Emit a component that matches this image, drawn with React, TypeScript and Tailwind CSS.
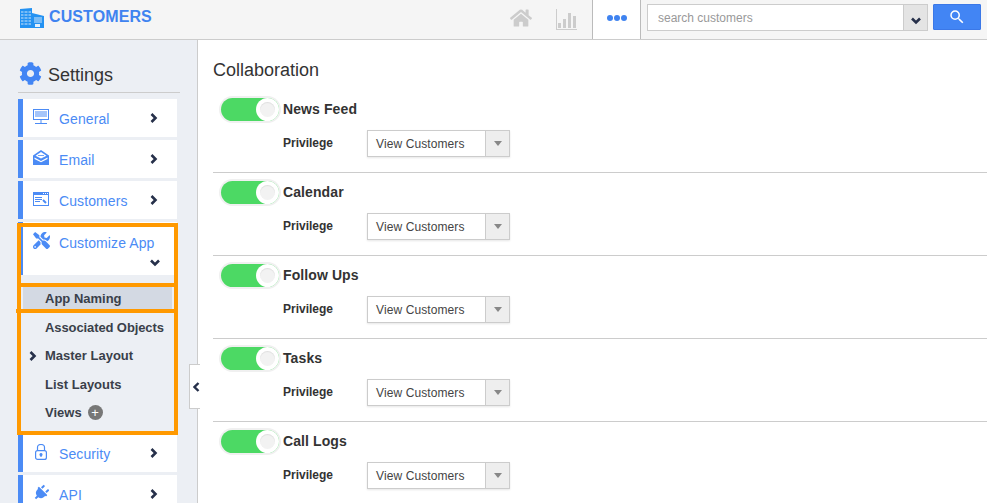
import { ReactNode } from 'react';
import { FaCog, FaHome, FaPlug, FaTools } from 'react-icons/fa';
import { MdSearch } from 'react-icons/md';

const FONT = "font-['Liberation_Sans',Arial,sans-serif]";

function BuildingIcon() {
  return (
    <svg width="24" height="20" viewBox="0 0 24 20" fill="#2492f2">
      <path d="M0 1 L12 0 V20 H0 Z" />
      <path d="M12 5 L24 8 V20 H12 Z" />
      <g stroke="#cfe6fb" strokeWidth="1">
        <path d="M1 4H11M1 7H11M1 10H11M1 13H11M1 16H11" />
        <path d="M14 10H22M14 12H22M14 14H22" />
      </g>
      <path d="M4 2V18M8 2V18" stroke="#2492f2" strokeWidth="1" />
      <rect x="15" y="16" width="5" height="3" fill="#e4f1fd" />
    </svg>
  );
}

function ChartIcon() {
  return (
    <svg width="21" height="21" viewBox="0 0 21 21" fill="#ccc">
      <path d="M0 0H1V20H21V21H0Z" />
      <rect x="2" y="14" width="3" height="5" />
      <rect x="7" y="10" width="3" height="9" />
      <rect x="12" y="4" width="3" height="15" />
      <rect x="17" y="7" width="3" height="12" />
    </svg>
  );
}

function MonitorIcon() {
  return (
    <svg width="16" height="15" viewBox="0 0 16 15" fill="none" stroke="#4b8bf5">
      <rect x="0.5" y="0.5" width="15" height="10" />
      <path d="M2 3H14M2 5H14M2 7H14M8 11V14M2 14.5H14" />
    </svg>
  );
}

function MailIcon() {
  return (
    <svg width="16" height="15" viewBox="0 0 16 15" fill="#4b8bf5">
      <path d="M8 0 L16 5.5 V15 H0 V5.5 Z" />
      <path d="M8 2 L13.5 5.8 L8 8.6 L2.5 5.8 Z" fill="#ffffff" />
      <path d="M5 5H11V5.8H5Z" />
      <path d="M1.5 7.5 L8 11 L14.5 7.5 V9 L8 12.2 L1.5 9 Z" fill="#ffffff" />
    </svg>
  );
}

function WindowIcon() {
  return (
    <svg width="16" height="14" viewBox="0 0 16 14" fill="none" stroke="#4b8bf5">
      <rect x="0.5" y="0.5" width="15" height="13" />
      <rect x="0" y="0" width="16" height="3" fill="#4b8bf5" stroke="none" />
      <path d="M10 1.5H11M12 1.5H13M14 1.5H15" stroke="#ffffff" />
      <path d="M2 5.5H9M2 7.5H9M2 9.5H7" />
      <path d="M10 8L13 11" strokeWidth="2" />
    </svg>
  );
}

function LockIcon() {
  return (
    <svg width="12" height="16" viewBox="0 0 12 16" fill="none" stroke="#4b8bf5" strokeWidth="1.2">
      <rect x="0.6" y="6.6" width="10.8" height="8.8" rx="2" />
      <path d="M2.5 6.5V3.5A3.5 3 0 0 1 9.5 3.5V6.5" />
      <circle cx="6" cy="10.5" r="1" fill="#4b8bf5" />
      <path d="M6 11V13" />
    </svg>
  );
}

function ChevronRight() {
  return (
    <svg width="8" height="10" viewBox="0 0 8 10" fill="none" stroke="#26304a" strokeWidth="2.6">
      <path d="M1.5 1L5.5 5L1.5 9" />
    </svg>
  );
}

function ChevronDown() {
  return (
    <svg width="10" height="8" viewBox="0 0 10 8" fill="none" stroke="#26304a" strokeWidth="2.6">
      <path d="M1 1.5L5 5.5L9 1.5" />
    </svg>
  );
}

function MenuCard({ icon, label }: { icon: ReactNode; label: string }) {
  return (
    <div className="flex h-[38px] shrink-0 items-center border-l-[5px] border-[#4b8bf5] bg-white">
      <span className="flex w-[36px] justify-center pr-[1px] pb-[3px]">{icon}</span>
      <span className="w-[91px] pt-[2px] text-[14px] tracking-[0.1px] text-[#4b8bf5]">{label}</span>
      <ChevronRight />
    </div>
  );
}

function SubItem({ label, active, tight }: { label: string; active?: boolean; tight?: boolean }) {
  return (
    <div className={`relative flex h-[28.4px] items-center pl-[27px] text-[13px] font-bold text-[#3a3f4a] ${active ? 'pt-0' : 'pt-[2px]'} ${tight ? 'tracking-[-0.1px]' : ''}`}>
      {active && <span className="absolute left-[11px] flex"><ChevronRight /></span>}
      {label}
    </div>
  );
}

function FeatureRow({ title, last }: { title: string; last?: boolean }) {
  return (
    <div className={`mb-[6px] h-[77px] shrink-0 pl-[8px] ${last ? '' : 'border-b border-[#cccccc]'}`}>
      <div className="flex h-[26px] items-center">
        <div className="flex h-[23px] w-[58px] items-center justify-end rounded-full bg-[#4cd964] shadow-[0_0_0_2px_#f0f0f0]">
          <div className="flex h-[23px] w-[23px] items-center justify-center rounded-full bg-white">
            <div className="h-[15px] w-[15px] rounded-full bg-[#f2f2f2] shadow-[inset_0_1px_1px_rgba(0,0,0,0.08)]" />
          </div>
        </div>
        <span className="ml-[4px] text-[14px] font-bold tracking-[0.1px] text-[#333333]">{title}</span>
      </div>
      <div className="mt-[8px] flex items-center pl-[62px]">
        <span className="w-[84px] pb-[2px] text-[12px] font-bold text-[#333333]">Privilege</span>
        <div className="flex h-[27px] w-[143px] items-center border border-[#cccccc] bg-white shadow-[0_1px_2px_rgba(0,0,0,0.1)]">
          <span className="flex-1 pl-[8px] text-[12px] tracking-[0.1px] text-[#444444]">View Customers</span>
          <span className="flex h-full w-[24px] items-center justify-center border-l border-[#cccccc] bg-[#eeeeee]">
            <span className="h-0 w-0 border-x-[4px] border-t-[5px] border-x-transparent border-t-[#888888]" />
          </span>
        </div>
      </div>
    </div>
  );
}

export default function App() {
  const features = ['News Feed', 'Calendar', 'Follow Ups', 'Tasks', 'Call Logs'];

  return (
    <div className={`${FONT} flex h-[503px] w-[987px] flex-col overflow-hidden bg-white`}>
      {/* Top bar */}
      <header className="flex h-[40px] shrink-0 items-start border-b border-[#cccccc] bg-[#f5f5f5]">
        <div className="mt-[8px] ml-[20px] flex items-start gap-[5px]">
          <BuildingIcon />
          <span className="text-[16px] leading-[18px] font-bold tracking-[0.1px] text-[#3f83f0]">CUSTOMERS</span>
        </div>
        <div className="ml-auto flex h-full items-start">
          <FaHome className="mt-[7px] text-[22px] text-[#cccccc]" />
          <span className="mt-[9px] ml-[24px]"><ChartIcon /></span>
          <div className="ml-[15px] flex h-full w-[49px] items-center justify-center gap-[1px] border-x border-[#bbbbbb] bg-white pb-[3px]">
            <span className="h-[6px] w-[6px] rounded-full bg-[#3f83f0]" />
            <span className="h-[6px] w-[6px] rounded-full bg-[#3f83f0]" />
            <span className="h-[6px] w-[6px] rounded-full bg-[#3f83f0]" />
          </div>
          <div className="mt-[4px] ml-[6px] flex h-[27px] w-[281px] border border-[#cccccc] bg-white">
            <span className="flex-1 self-center pl-[10px] text-[12px] text-[#999999]">search customers</span>
            <span className="flex w-[24px] items-center justify-center border-l border-[#cccccc] bg-[#e4e4e4] pt-[7px]">
              <ChevronDown />
            </span>
          </div>
          <div className="mt-[4px] mr-[6px] ml-[5px] flex h-[26px] w-[48px] items-center justify-center rounded-[1px] border border-[#3b78e7] bg-[#4285f4]">
            <MdSearch className="text-[18px] text-white" />
          </div>
        </div>
      </header>

      <div className="flex min-h-0 flex-1">
        {/* Sidebar */}
        <aside className="relative w-[198px] shrink-0 border-r border-[#cccccc] bg-[#eceff4] pl-[18px]">
          <div className="mt-[22px] flex h-[31px] w-[162px] items-start gap-[6px] border-b border-[#cccccc] pl-[1px]">
            <FaCog className="text-[23px] text-[#4285f4]" />
            <span className="text-[18px] text-[#333333]">Settings</span>
          </div>
          <div className="mt-[6px] flex w-[159px] flex-col gap-[3px]">
            <MenuCard icon={<MonitorIcon />} label="General" />
            <MenuCard icon={<MailIcon />} label="Email" />
            <MenuCard icon={<WindowIcon />} label="Customers" />
            <div className="flex h-[53px] shrink-0 items-start border-l-[5px] border-[#4b8bf5] bg-white pt-[10px]">
              <FaTools className="ml-[10px] text-[17px] text-[#4b8bf5]" />
              <div className="mt-px ml-[9px] text-[14px] tracking-[0.1px] text-[#4b8bf5]">
                Customize App
                <span className="mt-[5px] ml-[91px] flex"><ChevronDown /></span>
              </div>
            </div>
            <div className="flex flex-col">
              <div className="mx-[5px] mt-[9px] flex h-[22px] items-center bg-[#d3d9e3] pt-[2px] pl-[22px] text-[13px] font-bold text-[#3a3f4a]">App Naming</div>
              <div className="h-[4px]" />
              <SubItem label="Associated Objects" tight />
              <SubItem label="Master Layout" active />
              <SubItem label="List Layouts" />
              <div className="flex h-[28px] items-center gap-[6px] pl-[27px] text-[13px] font-bold text-[#3a3f4a]">
                <span className="pt-[2px]">Views</span>
                <span className="flex h-[15px] w-[15px] items-center justify-center rounded-full bg-[#777777] text-[13px] leading-none font-normal text-white">+</span>
              </div>
              <div className="h-[5px]" />
            </div>
            <MenuCard icon={<LockIcon />} label="Security" />
            <MenuCard icon={<FaPlug className="rotate-45 text-[16px] text-[#4b8bf5]" />} label="API" />
          </div>

          {/* Orange annotation boxes */}
          <div className="absolute top-[183px] left-[17px] h-[64px] w-[161px] border-[4px] border-[#ff9900]" />
          <div className="absolute top-[243px] left-[17px] h-[30px] w-[161px] border-[4px] border-[#ff9900]" />
          <div className="absolute top-[269px] left-[17px] h-[126px] w-[161px] border-[4px] border-[#ff9900]" />
          <div className="absolute top-[269px] left-[16px] h-[4px] w-[2px] bg-[#ff9900]" />

          {/* Collapse handle */}
          <div className="absolute top-[324px] left-[189px] flex h-[45px] w-[11px] items-center justify-center border border-r-0 border-[#cccccc] bg-white">
            <svg width="7" height="10" viewBox="0 0 7 10" fill="none" stroke="#26304a" strokeWidth="2.4" className="ml-[2px]">
              <path d="M5.5 1L1.5 5L5.5 9" />
            </svg>
          </div>
        </aside>

        {/* Content */}
        <main className="flex min-w-0 flex-1 flex-col pl-[15px]">
          <h1 className="mt-[20px] mb-[15px] text-[18px] leading-[21px] text-[#333333]">Collaboration</h1>
          {features.map((name, i) => (
            <FeatureRow key={name} title={name} last={i === features.length - 1} />
          ))}
        </main>
      </div>
    </div>
  );
}
